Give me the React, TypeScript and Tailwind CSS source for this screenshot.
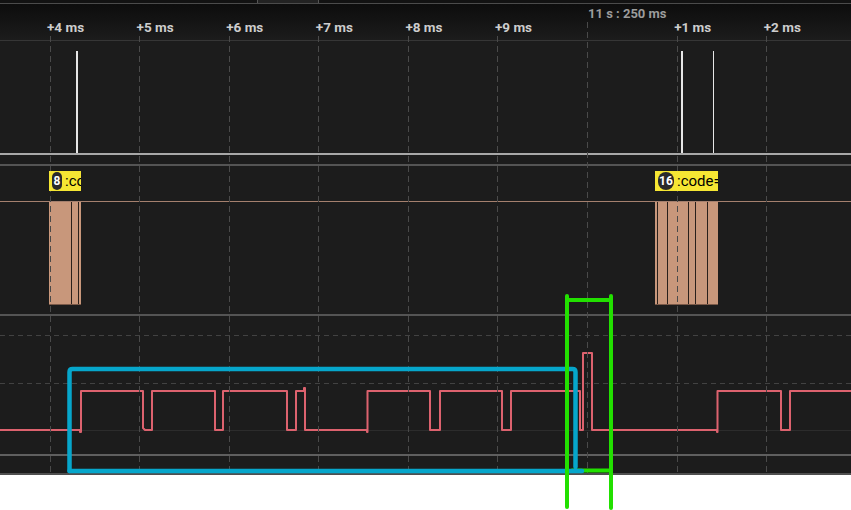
import React from "react";

const gridX = [50.5, 139.5, 229.5, 318.5, 408.5, 497.5, 587.5, 677.5, 766.5];
const labels = ["+4 ms", "+5 ms", "+6 ms", "+7 ms", "+8 ms", "+9 ms", "", "+1 ms", "+2 ms"];

const signal =
  "M0 114 H80 V116 H81 V75 H143 V112 L145 114 H152 V75 H215 V114 H223 V75 H287 V114 H296 V75 H304 V72 H305 V114 H367 V116 H367.5 V75 H430 V114 H440 V75 H502 V114 H511 V75 H580 V114 H583 V37 H592 V114 H717 V116 H717.5 V75 H781 V114 H790 V75 H851";

export default function App() {
  return (
    <div
      className="relative w-[851px] h-[510px] bg-white overflow-hidden"
      style={{ fontFamily: "Roboto, 'Liberation Sans', sans-serif" }}
    >
      <div className="flex flex-col w-full h-[475px] bg-[#1c1c1c]">
        {/* top strip */}
        <div className="flex h-[4px] bg-[#121212] border-b border-[#4b4b4b]">
          <div className="ml-[257px] w-[62px] h-full bg-[#232323] border-x border-[#555]" />
        </div>
        {/* time header */}
        <div className="relative h-[37px] bg-linear-to-b from-[#0d0d0d] to-[#1c1c1c] border-b border-[#363636]">
          <div className="flex pl-[47px] pt-[16px]">
            {labels.map((l, i) => (
              <div key={i} className="w-[89.6px] shrink-0 text-[13.5px] font-bold leading-[15px] text-[#cdcdcd] whitespace-nowrap">
                {l}
              </div>
            ))}
          </div>
          <div className="absolute left-[588px] top-[2px] text-[13px] font-bold leading-[15px] text-[#9c9c9c] whitespace-nowrap">
            11 s : 250 ms
          </div>
        </div>
        {/* digital channel */}
        <div className="h-[114px] border-b-2 border-[#a8a8a8]">
          <svg width="851" height="112" className="block">
            <rect x="76" y="10" width="2" height="102" fill="#e6e6e6" />
            <rect x="681" y="10" width="2" height="102" fill="#e6e6e6" />
            <rect x="713" y="10" width="1" height="102" fill="#e6e6e6" />
          </svg>
        </div>
        <div className="h-[11px] border-b-2 border-[#545454]" />
        {/* protocol labels */}
        <div className="relative z-10 flex items-start h-[35px]">
          <div className="flex items-center ml-[49px] mt-[5px] h-[20px] w-[32px] bg-[#f6e633] overflow-hidden">
            <div className="ml-[3px] h-[18px] w-[10px] shrink-0 rounded-full bg-[#2a2a2a] text-white text-[12px] font-bold flex items-center justify-center">
              8
            </div>
            <span className="ml-[3px] text-[15px] text-black leading-[20px]">:co</span>
          </div>
          <div className="flex items-center ml-[574px] mt-[5px] h-[20px] w-[63px] bg-[#f6e633] overflow-hidden">
            <div className="ml-[3px] h-[18px] w-[16px] shrink-0 rounded-full bg-[#2a2a2a] text-white text-[12px] font-bold flex items-center justify-center">
              16
            </div>
            <span className="ml-[3px] text-[15px] text-black leading-[20px]">:code=</span>
          </div>
        </div>
        {/* protocol blocks */}
        <div className="h-[115px] border-t border-[#a5806e] border-b-2 border-b-[#545454]">
          <svg width="851" height="112" className="block">
            <rect x="49" y="0" width="32" height="103" fill="#c8977b" />
            <rect x="655" y="0" width="63" height="103" fill="#c8977b" />
            <line x1="49" x2="81" y1="102.5" y2="102.5" stroke="#7b5a49" />
            <line x1="655" x2="718" y1="102.5" y2="102.5" stroke="#7b5a49" />
            {[71.5, 78.5, 657.5, 667.5, 688.5, 695.5, 707.5].map((x) => (
              <line key={x} x1={x} x2={x} y1="0" y2="102" stroke="#2a201b" />
            ))}
          </svg>
        </div>
        {/* analog */}
        <div className="h-[140px] border-b-2 border-[#5f5f5f]">
          <svg width="851" height="138" className="block">
            <line x1="0" x2="851" y1="19.5" y2="19.5" stroke="#424242" strokeDasharray="5 4" />
            <line x1="0" x2="851" y1="67.5" y2="67.5" stroke="#424242" strokeDasharray="5 4" />
            <line x1="0" x2="851" y1="114.5" y2="114.5" stroke="#2c2c2c" />
            <path d={signal} fill="none" stroke="#dc626e" strokeWidth="2" strokeLinejoin="round" />
          </svg>
        </div>
        <div className="h-[19px] border-b-2 border-[#4f4f4f]" />
      </div>

      {/* grid overlay */}
      <svg width="851" height="510" className="absolute left-0 top-0 pointer-events-none">
        {gridX.map((x) => (
          <line
            key={x}
            x1={x}
            x2={x}
            y1={x === 587.5 ? 22 : 36}
            y2="475"
            stroke="#4a4a4a"
            strokeDasharray="6 4"
          />
        ))}
      </svg>

      {/* annotations */}
      <svg width="851" height="510" className="absolute left-0 top-0 pointer-events-none z-20">
        <line x1="572" x2="611" y1="470.5" y2="470.5" stroke="#22e000" strokeWidth="4" strokeLinecap="round" />
        <path
          d="M69.5 471 V372 Q69.5 369 72.5 369 H572.5 Q575.5 369 575.5 372 V467"
          fill="none"
          stroke="#06a6cb"
          strokeWidth="4.5"
          strokeLinecap="round"
        />
        <line x1="69.5" x2="582" y1="471" y2="471" stroke="#06a6cb" strokeWidth="4.5" strokeLinecap="round" />
        <line x1="567" x2="567" y1="296" y2="507" stroke="#22e000" strokeWidth="4" strokeLinecap="round" />
        <line x1="611" x2="611" y1="296" y2="508" stroke="#22e000" strokeWidth="4" strokeLinecap="round" />
        <line x1="567" x2="611" y1="300" y2="300" stroke="#22e000" strokeWidth="4" strokeLinecap="round" />
      </svg>
    </div>
  );
}
